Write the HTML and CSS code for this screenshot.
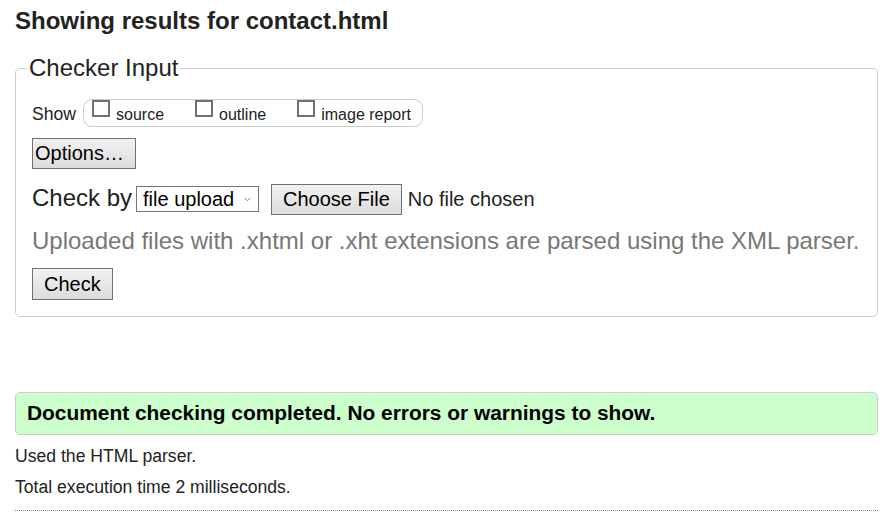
FILE: index.html
```
<!DOCTYPE html>
<html lang="en">
<head>
<meta charset="utf-8">
<title>Showing results for contact.html - Nu Html Checker</title>
<link rel="stylesheet" href="styles.css">
</head>
<body>
<h1 class="title">Showing results for contact.html</h1>
<form class="checker">
<fieldset class="checker-input">
<legend class="legend">Checker Input</legend>
<div class="show-row"><span class="show-label">Show</span><span class="opts"><label class="opt"><span class="cb"></span>source</label><label class="opt"><span class="cb"></span>outline</label><label class="opt"><span class="cb"></span>image report</label></span></div>
<div class="options-row"><button type="button" class="btn btn-options">Options…</button></div>
<div class="checkby-row"><span class="checkby-label">Check by</span><span class="select-wrap"><select class="select"><option>file upload</option></select><svg class="chev" width="7" height="5" viewBox="0 0 7 5"><polyline points="0.5,0.8 3.5,3.8 6.5,0.8" fill="none" stroke="#7a7a7a" stroke-width="1"/></svg></span><button type="button" class="btn btn-file">Choose File</button><span class="nofile">No file chosen</span></div>
<p class="hint">Uploaded files with .xhtml or .xht extensions are parsed using the XML parser.</p>
<div class="check-row"><button type="button" class="btn btn-check">Check</button></div>
</fieldset>
</form>
<div class="status">Document checking completed. No errors or warnings to show.</div>
<p class="stats">Used the HTML parser.</p>
<p class="stats">Total execution time 2 milliseconds.</p>
<hr class="rule">
</body>
</html>
```
FILE: styles.css
```
html, body {
  background: #fff;
}
body {
  margin: 0;
  padding: 0 18px 0 15px;
  font-family: "Liberation Sans", Arial, sans-serif;
  font-size: 17.6px;
  color: #222;
}
.title {
  font-size: 24px;
  line-height: 28px;
  font-weight: bold;
  margin: 7px 0 19px;
  color: #222;
}
.checker {
  margin: 0;
}
.checker-input {
  margin: 0;
  min-width: 0;
  border: 1px solid #ccc;
  border-radius: 5px;
  padding: 0 8px 16px 16px;
}
.legend {
  font-size: 24px;
  line-height: 28px;
  padding: 0 2px;
  margin-left: -5px;
  color: #222;
}
.show-row {
  display: flex;
  align-items: baseline;
  margin-top: 17px;
}
.show-label {
  margin-right: 7px;
}
.opts {
  display: block;
  font-size: 16px;
  border: 1px solid #ccc;
  border-radius: 9px;
  padding: 0 11px 2px 8px;
  white-space: nowrap;
}
.opt + .opt {
  margin-left: 31px;
}
.cb {
  display: inline-block;
  box-sizing: border-box;
  width: 18px;
  height: 17px;
  border: 2px solid #707070;
  background: #fff;
  margin: 0 6px 3px 0;
  vertical-align: baseline;
}
.options-row {
  margin-top: 11px;
}
.btn {
  font-family: "Liberation Sans", Arial, sans-serif;
  font-size: 20px;
  line-height: 29px;
  height: 31px;
  color: #000;
  background: linear-gradient(#f2f2f2, #dcdcdc);
  border: 1px solid #707070;
  border-radius: 0;
  padding: 0 11px;
  margin: 0;
  box-sizing: border-box;
}
.btn-options {
  padding: 0 11px 0 2px;
}
.checkby-row {
  display: flex;
  align-items: baseline;
  margin-top: 15px;
}
.checkby-label {
  font-size: 24px;
  margin-right: 4px;
}
.select-wrap {
  display: inline-flex;
  align-items: center;
}
.select {
  -webkit-appearance: none;
  appearance: none;
  box-sizing: border-box;
  width: 123px;
  height: 26px;
  font-family: "Liberation Sans", Arial, sans-serif;
  font-size: 20px;
  color: #000;
  background: #fff;
  border: 1px solid #767676;
  border-radius: 0;
  padding: 0 20px 0 6px;
  margin: 0;
}
.chev {
  margin-left: -15px;
  margin-right: 8px;
  pointer-events: none;
}
.btn-file {
  margin-left: 12px;
}
.nofile {
  font-size: 20px;
  margin-left: 6px;
  color: #222;
}
.hint {
  font-size: 24px;
  color: #777;
  margin: 12px 0 0;
  white-space: nowrap;
}
.check-row {
  margin-top: 13px;
}
.btn-check {
  height: 32px;
  line-height: 30px;
}
.status {
  margin-top: 75px;
  background: #ccffcc;
  border: 1px solid #ccc;
  border-radius: 5px;
  padding: 8px 11px 9px;
  font-weight: bold;
  font-size: 20.9px;
  line-height: 24px;
  color: #000;
}
.stats {
  margin: 11px 0 0;
  line-height: 20px;
}
.rule {
  border: 0;
  border-top: 1px dotted #888;
  margin: 13px 0 0;
  height: 0;
}
```
